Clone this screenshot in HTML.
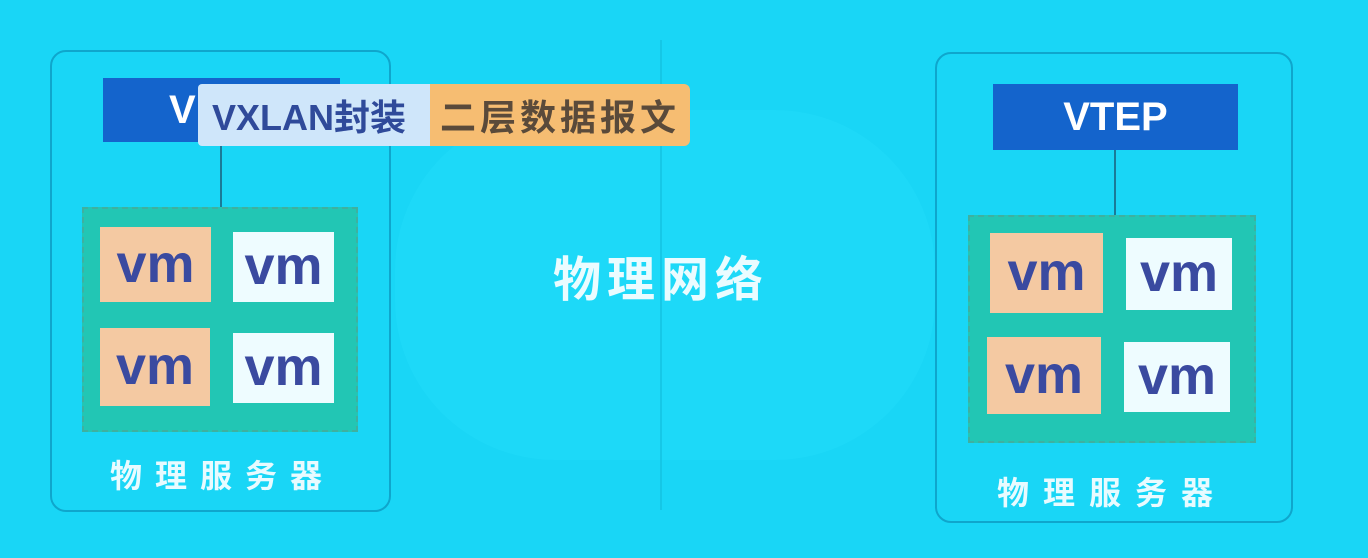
<!DOCTYPE html>
<html><head><meta charset="utf-8"><style>
*{margin:0;padding:0;box-sizing:border-box}
body{width:1368px;height:558px;overflow:hidden;background:#19d6f6;position:relative;font-family:"Liberation Sans","Noto Sans CJK SC",sans-serif}
.a{position:absolute}
.srv{border:2px solid #0fa6cc;border-radius:16px}
.vtep{background:#1464cc;color:#fff;font-weight:bold;font-size:40px;display:flex;align-items:center;justify-content:center}
.line{width:2px;background:#1a7a98}
.grn{background:#22c6b4;border:2px dashed #3fb0a0}
.vm{display:flex;align-items:center;justify-content:center;font-size:54px;font-weight:bold;color:#3a4aa0;padding-bottom:2px}
.o{background:#f4c9a2}
.w{background:#eefcff}
.lbl{color:#e8fbff;font-weight:bold;font-size:32px;letter-spacing:13px;white-space:nowrap}
</style></head><body>
<div class="a" style="left:395px;top:110px;width:540px;height:350px;border-radius:160px;background:#22dcfa;opacity:.5"></div>
<div class="a" style="left:660px;top:40px;width:2px;height:470px;background:#12bcdc;opacity:.6"></div>

<div class="a srv" style="left:50px;top:50px;width:341px;height:462px"></div>
<div class="a vtep" style="left:103px;top:78px;width:237px;height:64px;justify-content:flex-start;padding-left:66px">V</div>
<div class="a line" style="left:220px;top:142px;height:66px"></div>
<div class="a grn" style="left:82px;top:207px;width:276px;height:225px"></div>
<div class="a vm o" style="left:100px;top:227px;width:111px;height:75px">vm</div>
<div class="a vm w" style="left:233px;top:232px;width:101px;height:70px">vm</div>
<div class="a vm o" style="left:100px;top:328px;width:110px;height:78px">vm</div>
<div class="a vm w" style="left:233px;top:333px;width:101px;height:70px">vm</div>
<div class="a lbl" style="left:110px;top:451px">物理服务器</div>

<div class="a" style="left:198px;top:84px;width:234px;height:62px;background:#cfe6fa;color:#2f4a9a;font-size:36px;font-weight:bold;display:flex;align-items:center;padding-left:14px;border-radius:4px 0 0 4px;white-space:nowrap">VXLAN封装</div>
<div class="a" style="left:430px;top:84px;width:260px;height:62px;background:#f6bd72;color:#5a4a3a;font-size:36px;font-weight:bold;display:flex;align-items:center;padding-left:10px;letter-spacing:4px;border-radius:0 6px 6px 0;white-space:nowrap">二层数据报文</div>

<div class="a" style="left:553px;top:240px;color:#eafcff;font-size:48px;font-weight:bold;letter-spacing:6px;white-space:nowrap">物理网络</div>

<div class="a srv" style="left:935px;top:52px;width:358px;height:471px"></div>
<div class="a vtep" style="left:993px;top:84px;width:245px;height:66px">VTEP</div>
<div class="a line" style="left:1114px;top:150px;height:66px"></div>
<div class="a grn" style="left:968px;top:215px;width:288px;height:228px"></div>
<div class="a vm o" style="left:990px;top:233px;width:113px;height:80px">vm</div>
<div class="a vm w" style="left:1126px;top:238px;width:106px;height:72px">vm</div>
<div class="a vm o" style="left:987px;top:337px;width:114px;height:77px">vm</div>
<div class="a vm w" style="left:1124px;top:342px;width:106px;height:70px">vm</div>
<div class="a lbl" style="left:997px;top:468px;letter-spacing:14px">物理服务器</div>
</body></html>
